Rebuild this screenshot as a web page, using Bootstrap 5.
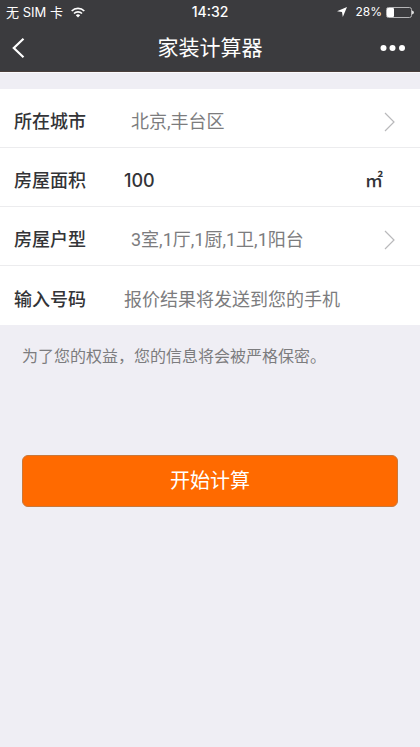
<!DOCTYPE html>
<html lang="zh-CN">
<head>
<meta charset="utf-8">
<meta name="viewport" content="width=device-width, initial-scale=1">
<title>家装计算器</title>
<link href="https://cdn.jsdelivr.net/npm/bootstrap@5.3.0/dist/css/bootstrap.min.css" rel="stylesheet">
<style>
  body { background: #efeef4; color: #333437; font-family: Inter, "Noto Sans CJK SC", sans-serif; font-size: 18px; line-height: 24px; }
  .topbar { background: #3b3b3e; color: #fff; border-bottom: 1px solid #4a3f3b; box-shadow: 0 1px #fbfafc; }
  .status { height: 24px; font-size: 13px; line-height: 24px; padding: 0 6px; }
  .side { flex: 1 1 0; }
  .clock { font-size: 14px; }
  .charge { font-size: 12px; margin: 0 4px 0 8px; }
  .titlebar { height: 47px; padding: 0 12px; }
  .titlebar h1 { font-size: 21px; line-height: 24px; font-weight: 400; }
  .plain { background: none; border: 0; padding: 0; color: inherit; line-height: 1; }
  .form-rows { margin-top: 17px; }
  .form-line { height: 59px; padding: 8px 25px 0 14px; border-bottom: 1px solid #ececee; }
  .form-line:last-child { border-bottom: 0; }
  .form-line label { flex: 0 0 110px; font-weight: 500; }
  .picker { padding-left: 7px; color: #7c7c7e; line-height: 24px; font-family: Roboto, "Noto Sans CJK SC", sans-serif; }
  .entry, .entry:focus { border: 0; padding: 0; box-shadow: none; background: none; color: #333437; font-size: 18px; line-height: 24px; font-weight: 500; }
  .entry::placeholder { color: #7c7c7e; font-weight: 400; opacity: 1; }
  .unit { margin-right: 12px; font-weight: 500; }
  .note { color: #7c7c7e; font-size: 16px; padding: 19px 22px 0; }
  .action { padding: 87px 22px 0; }
  .btn-start, .btn-start:hover, .btn-start:active { background: #ff6a00; border: 1px solid #c9783a; color: #fff; font-size: 20px; line-height: 24px; height: 52px; border-radius: 6px; }
</style>
<script src="https://cdn.jsdelivr.net/npm/bootstrap@5.3.0/dist/js/bootstrap.bundle.min.js"></script>
</head>
<body>
<header class="topbar">
  <div class="status d-flex align-items-center">
    <div class="side d-flex align-items-center gap-2">
      <span>无 SIM 卡</span>
      <svg width="14" height="11" viewBox="0 0 14 11" fill="none" stroke="#fff" stroke-width="1.7" aria-hidden="true"><path d="M.7 4A9 9 0 0 1 13.3 4M3 6.500a5.700 5.700 0 0 1 8 0"/><path d="M7 10.500 4.800 8.200a3.200 3.200 0 0 1 4.400 0z" fill="#fff" stroke="none"/></svg>
    </div>
    <span class="clock fw-medium">14:32</span>
    <div class="side d-flex align-items-center justify-content-end">
      <svg width="10" height="10" viewBox="0 0 10 10" fill="#fff" aria-hidden="true"><path d="M10 0 5.800 10 5 5 0 4.200z"/></svg>
      <span class="charge">28%</span>
      <svg width="28" height="11" viewBox="0 0 28 11" aria-hidden="true"><rect x=".5" y=".5" width="25" height="10" rx="2" fill="none" stroke="#b5b5b7"/><rect x="1" y="1" width="7" height="9" rx="1" fill="#fff"/><path d="M26 3.500q2 .5 2 2t-2 2z" fill="#ddd"/></svg>
    </div>
  </div>
  <nav class="titlebar d-flex align-items-center" aria-label="导航">
    <div class="side d-flex"><button type="button" class="plain" aria-label="返回"><svg class="d-block" width="14" height="20" viewBox="0 0 14 20" fill="none" stroke="#fff" stroke-width="2.200"><path d="M11.500.8 1.800 10l9.700 9.200"/></svg></button></div>
    <h1 class="m-0">家装计算器</h1>
    <div class="side d-flex justify-content-end"><button type="button" class="plain" aria-label="更多"><svg class="d-block" width="28" height="8" viewBox="0 0 28 8" fill="#fff"><circle cx="3.500" cy="4" r="3"/><circle cx="12.500" cy="4" r="3"/><circle cx="22" cy="4" r="3"/></svg></button></div>
  </nav>
</header>
<main>
  <form>
    <div class="form-rows bg-white">
      <div class="form-line d-flex align-items-center">
        <label for="city">所在城市</label>
        <button type="button" id="city" class="plain picker flex-fill d-flex align-items-center justify-content-between"><span>北京,丰台区</span><svg width="11" height="20" viewBox="0 0 11 20" fill="none" stroke="#b9b9bb" stroke-width="1.200" aria-hidden="true"><path d="M1 1 10 10 1 19"/></svg></button>
      </div>
      <div class="form-line d-flex align-items-center">
        <label for="area">房屋面积</label>
        <input id="area" class="form-control entry flex-fill w-auto" type="text" inputmode="numeric" value="100" size="8">
        <span class="unit">㎡</span>
      </div>
      <div class="form-line d-flex align-items-center">
        <label for="rooms">房屋户型</label>
        <button type="button" id="rooms" class="plain picker flex-fill d-flex align-items-center justify-content-between"><span>3室,1厅,1厨,1卫,1阳台</span><svg width="11" height="20" viewBox="0 0 11 20" fill="none" stroke="#b9b9bb" stroke-width="1.200" aria-hidden="true"><path d="M1 1 10 10 1 19"/></svg></button>
      </div>
      <div class="form-line d-flex align-items-center">
        <label for="phone">输入号码</label>
        <input id="phone" class="form-control entry flex-fill w-auto" type="tel" placeholder="报价结果将发送到您的手机">
      </div>
    </div>
    <p class="note m-0">为了您的权益，您的信息将会被严格保密。</p>
    <div class="action"><button type="button" class="btn btn-start w-100">开始计算</button></div>
  </form>
</main>
</body>
</html>
